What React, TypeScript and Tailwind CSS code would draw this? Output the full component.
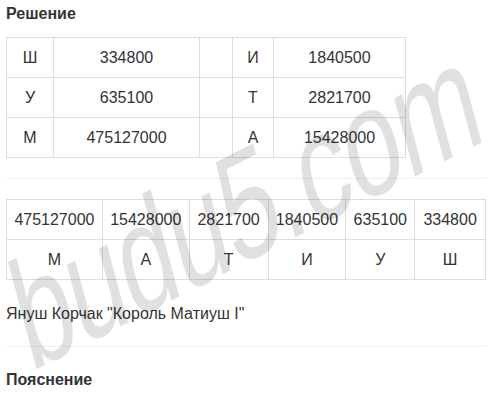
const TOP = [
  ["Ш", "334800", "И", "1840500"],
  ["У", "635100", "Т", "2821700"],
  ["М", "475127000", "А", "15428000"],
];

const BOTTOM = [
  { num: "475127000", letter: "М", w: "w-[97px]" },
  { num: "15428000", letter: "А", w: "w-[88px]" },
  { num: "2821700", letter: "Т", w: "w-[80px]" },
  { num: "1840500", letter: "И", w: "w-[79px]" },
  { num: "635100", letter: "У", w: "w-[70px]" },
  { num: "334800", letter: "Ш", w: "w-[72px]" },
];

const cell = "border border-[#ddd] h-[40px] p-0 text-center align-middle";

export default function App() {
  return (
    <div className="relative w-[496px] h-[394px] overflow-hidden bg-white text-[#333] font-['Liberation_Sans',Arial,sans-serif]">
      <div className="w-[480px] ml-[6px] pt-[4px]">
        <h4 className="text-[16px] leading-[20px] font-bold">Решение</h4>

        {/* letters table */}
        <table className="mt-[13px] border-collapse text-[16px] leading-[24px]">
          <tbody>
            {TOP.map((row, i) => (
              <tr key={i}>
                <td className={`${cell} w-[47px]`}>{row[0]}</td>
                <td className={`${cell} w-[146px]`}>{row[1]}</td>
                <td className={`${cell} w-[33px]`}></td>
                <td className={`${cell} w-[41px]`}>{row[2]}</td>
                <td className={`${cell} w-[132px]`}>{row[3]}</td>
              </tr>
            ))}
          </tbody>
        </table>

        <hr className="mt-[20px] mb-[20px] border-0 border-t border-[#eee]" />

        {/* ordered table */}
        <table className="border-collapse text-[16px] leading-[24px]">
          <tbody>
            <tr>
              {BOTTOM.map((c) => (
                <td key={c.num} className={`${cell} ${c.w}`}>{c.num}</td>
              ))}
            </tr>
            <tr>
              {BOTTOM.map((c) => (
                <td key={c.num} className={cell}>{c.letter}</td>
              ))}
            </tr>
          </tbody>
        </table>

        <p className="mt-[22px] text-[16px] leading-[24px]">Януш Корчак "Король Матиуш I"</p>

        <hr className="mt-[20px] border-0 border-t border-[#eee]" />

        <h4 className="mt-[23px] text-[16px] leading-[20px] font-bold">Пояснение</h4>
      </div>

      {/* watermark */}
      <div className="pointer-events-none absolute left-[30px] top-[282px] h-[100px] origin-[0_89px] [transform:rotate(-27deg)_skewX(-12deg)_scaleY(1.4)] text-[107px] tracking-[-2px] leading-none text-black/[0.12] whitespace-nowrap font-['Liberation_Sans',Arial,sans-serif]">
        budu5.com
      </div>
    </div>
  );
}
